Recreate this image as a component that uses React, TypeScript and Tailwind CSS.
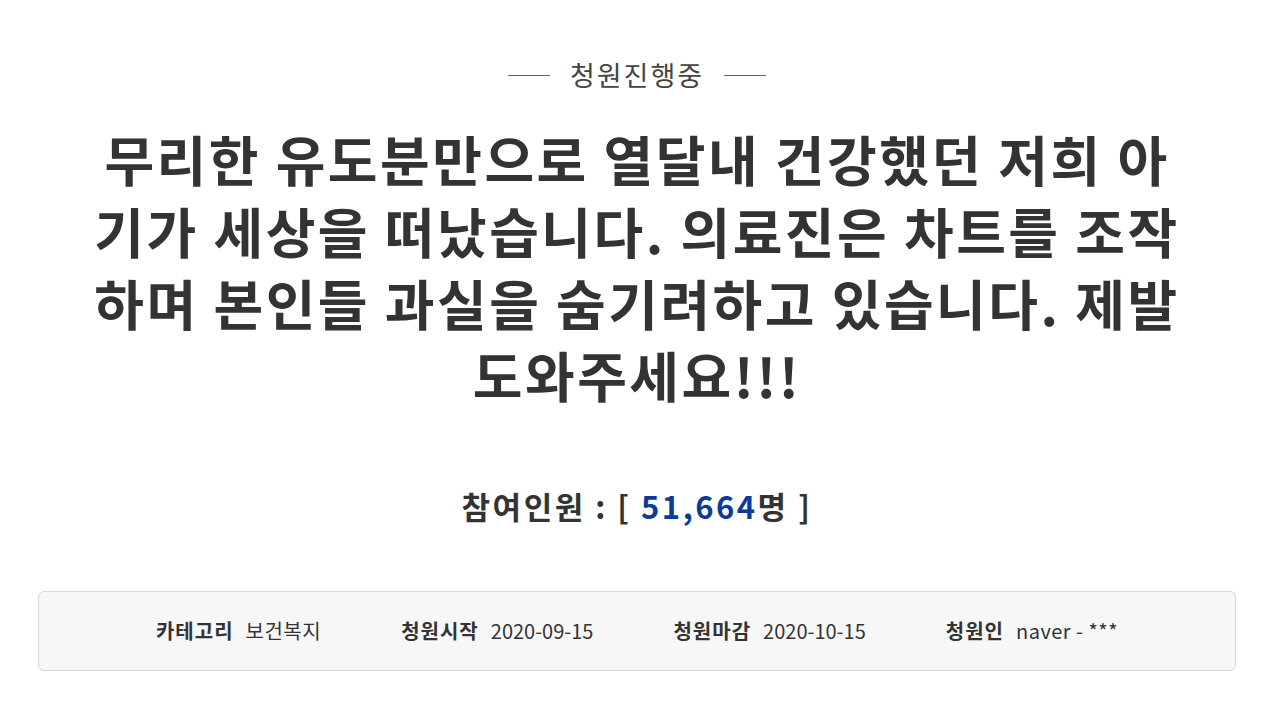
export default function App() {
  const font = { fontFamily: '"Noto Sans CJK KR", "Noto Sans", sans-serif' };
  return (
    <div className="w-[1280px] h-[720px] bg-white text-[#333] flex flex-col items-center pr-[6px]" style={font}>
      <div className="mt-[55px] flex items-center gap-[20px]">
        <div className="w-[42px] h-[1px] bg-[#666]" />
        <div className="text-[27px] leading-[40px] text-[#444] tracking-[2px]">청원진행중</div>
        <div className="w-[42px] h-[1px] bg-[#666]" />
      </div>
      <h1 className="mt-[28px] w-[1095px] text-center text-[54px] leading-[72px] font-bold text-[#333] tracking-[2.5px]">
        무리한 유도분만으로 열달내 건강했던 저희 아기가 세상을 떠났습니다. 의료진은 차트를 조작하며 본인들 과실을 숨기려하고 있습니다. 제발 도와주세요!!!
      </h1>
      <div className="mt-[73px] text-[31px] leading-[44px] font-bold text-[#333] tracking-[2.5px]">
        참여인원 : [ <span className="text-[#0b3c9a]">51,664</span>명 ]
      </div>
      <div className="mt-[63px] w-[1198px] h-[80px] bg-[#f7f7f7] border border-[#d6d6d6] rounded-[6px] flex items-center justify-center gap-[80px] text-[20px] text-[#333]">
        <div className="flex items-center gap-[12px]">
          <span className="font-bold tracking-[1px]">카테고리</span>
          <span className="tracking-[0.5px]">보건복지</span>
        </div>
        <div className="flex items-center gap-[12px]">
          <span className="font-bold tracking-[1px]">청원시작</span>
          <span>2020-09-15</span>
        </div>
        <div className="flex items-center gap-[12px]">
          <span className="font-bold tracking-[1px]">청원마감</span>
          <span>2020-10-15</span>
        </div>
        <div className="flex items-center gap-[12px]">
          <span className="font-bold tracking-[1px]">청원인</span>
          <span className="tracking-[0.5px]">naver - ***</span>
        </div>
      </div>
    </div>
  );
}
